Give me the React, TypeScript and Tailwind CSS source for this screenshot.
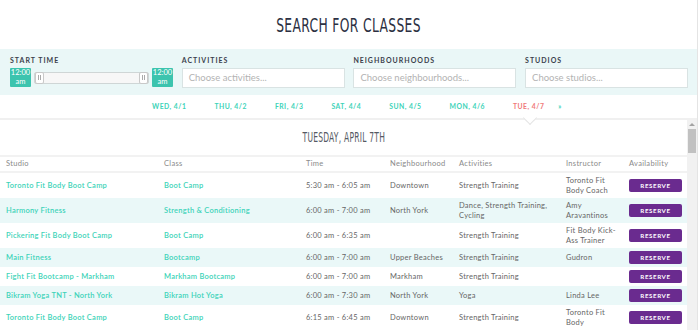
import React from 'react';

type Row = {
  studio: string;
  cls: string;
  time: string;
  hood: string;
  acts: string;
  instructor: string;
};

const rows: Row[] = [
  { studio: 'Toronto Fit Body Boot Camp', cls: 'Boot Camp', time: '5:30 am - 6:05 am', hood: 'Downtown', acts: 'Strength Training', instructor: 'Toronto Fit Body Coach' },
  { studio: 'Harmony Fitness', cls: 'Strength & Conditioning', time: '6:00 am - 7:00 am', hood: 'North York', acts: 'Dance, Strength Training, Cycling', instructor: 'Amy Aravantinos' },
  { studio: 'Pickering Fit Body Boot Camp', cls: 'Boot Camp', time: '6:00 am - 6:35 am', hood: '', acts: 'Strength Training', instructor: 'Fit Body Kick-Ass Trainer' },
  { studio: 'Main Fitness', cls: 'Bootcamp', time: '6:00 am - 7:00 am', hood: 'Upper Beaches', acts: 'Strength Training', instructor: 'Gudron' },
  { studio: 'Fight Fit Bootcamp - Markham', cls: 'Markham Bootcamp', time: '6:00 am - 7:00 am', hood: 'Markham', acts: 'Strength Training', instructor: '' },
  { studio: 'Bikram Yoga TNT - North York', cls: 'Bikram Hot Yoga', time: '6:00 am - 7:30 am', hood: 'North York', acts: 'Yoga', instructor: 'Linda Lee' },
  { studio: 'Toronto Fit Body Boot Camp', cls: 'Boot Camp', time: '6:15 am - 6:45 am', hood: 'Downtown', acts: 'Strength Training', instructor: 'Toronto Fit Body' },
];

const days = ['WED, 4/1', 'THU, 4/2', 'FRI, 4/3', 'SAT, 4/4', 'SUN, 4/5', 'MON, 4/6'];

const cols = 'grid grid-cols-[158px_142px_84px_69px_107px_63px_57px] pl-[6px]';

const Filter = ({ label, placeholder }: { label: string; placeholder: string }) => (
  <div className="flex flex-col">
    <div className="text-[7px] font-bold tracking-[1px] text-[#3b3f4c] leading-[10px]">{label}</div>
    <div className="mt-[3px] h-[20px] bg-white border border-[#d9e3e3] flex items-center px-[6px] text-[9.5px] text-[#b3b3b3]">
      {placeholder}
    </div>
  </div>
);

const TimeBadge = () => (
  <div className="w-[21px] h-[19px] bg-[#3cc4ae] rounded-[1px] text-white text-[7.5px] leading-[8.5px] flex flex-col items-center justify-center">
    <span>12:00</span>
    <span>am</span>
  </div>
);

export default function App() {
  return (
    <div className="w-[700px] h-[330px] overflow-hidden bg-white font-['Lato','Liberation_Sans',sans-serif]">
      <div className="w-[698px] h-[330px] border-r border-[#e4e4e4] flex flex-col">
        {/* title */}
        <div className="h-[49px] flex items-center justify-center">
          <span className="inline-block scale-x-[0.72] font-['DejaVu_Sans_Condensed','DejaVu_Sans',sans-serif] text-[19px] tracking-[0.5px] text-[#2c3042] pt-[2px]">
            SEARCH FOR CLASSES
          </span>
        </div>

        {/* filters */}
        <div className="h-[46px] bg-[#eaf7f7] pl-[10px] pt-[6px] grid grid-cols-[163px_163px_163px_163px] gap-x-[8.7px]">
          <div className="flex flex-col">
            <div className="text-[7px] font-bold tracking-[1px] text-[#3b3f4c] leading-[10px]">START TIME</div>
            <div className="mt-[3px] flex items-center gap-[3px]">
              <TimeBadge />
              <div className="relative flex-1 h-[12px] bg-[#f7f7f7] border border-[#cfd6d6] rounded-[2px]">
                <div className="absolute left-0 top-[-1px] w-[9px] h-[12px] bg-white border border-[#c9c9c9] rounded-[2px] flex items-center justify-center gap-[1px]">
                  <span className="w-px h-[5px] bg-[#aaa]" />
                  <span className="w-px h-[5px] bg-[#aaa]" />
                </div>
                <div className="absolute right-0 top-[-1px] w-[9px] h-[12px] bg-white border border-[#c9c9c9] rounded-[2px] flex items-center justify-center gap-[1px]">
                  <span className="w-px h-[5px] bg-[#aaa]" />
                  <span className="w-px h-[5px] bg-[#aaa]" />
                </div>
              </div>
              <TimeBadge />
            </div>
          </div>
          <Filter label="ACTIVITIES" placeholder="Choose activities..." />
          <Filter label="NEIGHBOURHOODS" placeholder="Choose neighbourhoods..." />
          <Filter label="STUDIOS" placeholder="Choose studios..." />
        </div>

        {/* day tabs */}
        <div className="relative h-[25px] flex items-center pl-[152px] gap-[28px] text-[6.8px] font-bold tracking-[0.5px] text-[#3dd3b8] border-b-2 border-[#f0f0f0]">
          {days.map((d) => (
            <span key={d}>{d}</span>
          ))}
          <span className="text-[#f07a7a]">TUE, 4/7</span>
          <span className="-ml-[14px]">»</span>
          <div className="absolute left-[525px] top-[18px] w-[10px] h-[10px] rotate-45 bg-white border-r border-b border-[#e4e4e4]" />
        </div>

        {/* content */}
        <div className="flex-1 flex min-h-0">
          <div className="w-[688px] flex flex-col">
            <div className="h-[35px] flex items-center justify-center">
              <span className="inline-block scale-x-[0.6] font-['DejaVu_Sans_Condensed','DejaVu_Sans',sans-serif] text-[14px] tracking-[0.4px] text-[#555a63]">
                TUESDAY, APRIL 7TH
              </span>
            </div>
            <div className={`${cols} h-[18px] items-center border-t-2 border-b-2 border-[#f2f2f2] text-[7.5px] tracking-[0.3px] text-[#8a8a8a]`}>
              <span>Studio</span>
              <span>Class</span>
              <span>Time</span>
              <span>Neighbourhood</span>
              <span>Activities</span>
              <span>Instructor</span>
              <span>Availability</span>
            </div>
            {rows.map((r, i) => (
              <div
                key={i}
                className={`${cols} items-center py-[3px] min-h-[19px] text-[7.5px] leading-[9.5px] tracking-[0.25px] text-[#666] ${i % 2 === 1 ? 'bg-[#eaf8f8]' : ''}`}
              >
                <span className="text-[#3dd3b8] font-semibold">{r.studio}</span>
                <span className="text-[#3dd3b8] font-semibold">{r.cls}</span>
                <span>{r.time}</span>
                <span>{r.hood}</span>
                <span className="pr-[6px]">{r.acts}</span>
                <span className="pr-[6px]">{r.instructor}</span>
                <span>
                  <span className="w-[53px] h-[13px] bg-[#6a2b8f] rounded-[2px] text-white text-[6.2px] font-bold tracking-[0.6px] flex items-center justify-center">
                    RESERVE
                  </span>
                </span>
              </div>
            ))}
          </div>
          {/* scrollbar */}
          <div className="w-[10px] bg-[#f1f1f1] flex flex-col items-center pt-[3px]">
            <div className="w-0 h-0 border-l-[3px] border-r-[3px] border-b-[3px] border-l-transparent border-r-transparent border-b-[#a3a3a3]" />
            <div className="mt-[3px] w-[8px] h-[24px] bg-[#c1c1c1]" />
          </div>
        </div>
      </div>
    </div>
  );
}
